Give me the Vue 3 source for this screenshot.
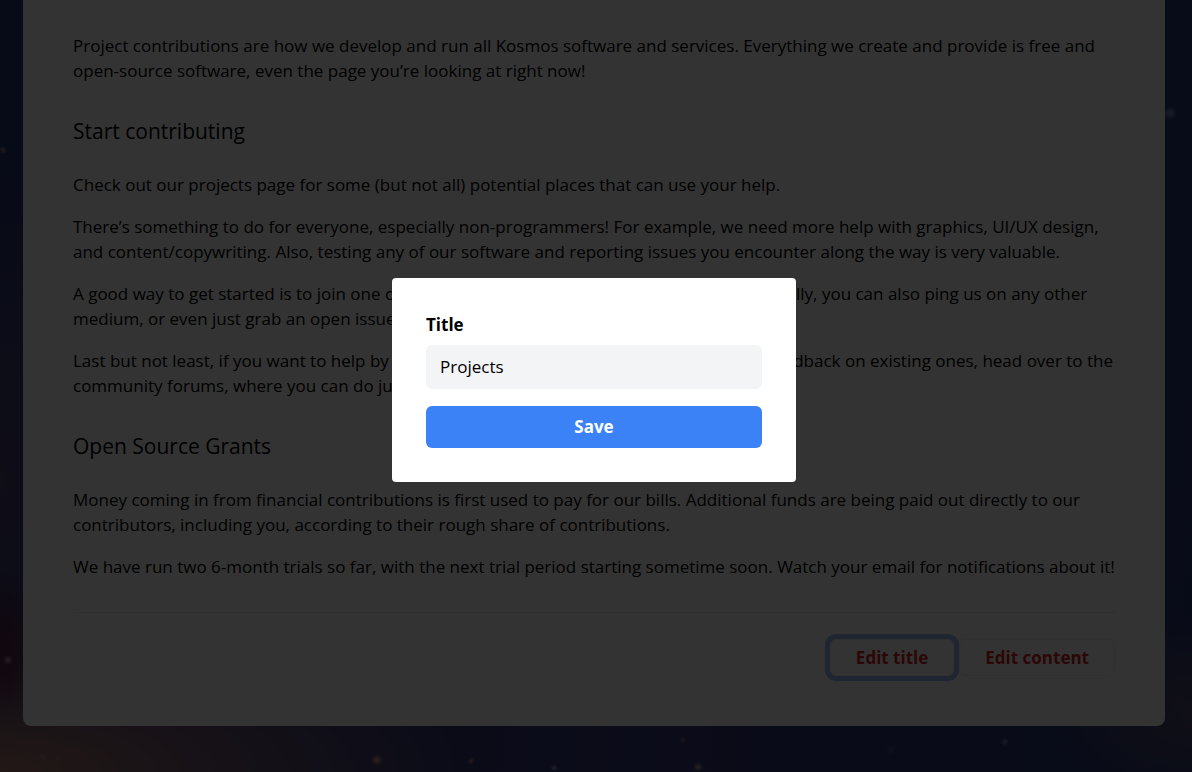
<script setup>
import { ref } from 'vue'

const title = ref('Projects')
</script>

<template>
  <div class="page">
    <main class="card">
      <p>
        Project contributions are how we develop and run all Kosmos software and services. Everything we create and
        provide is free and open-source software, even the page you’re looking at right now!
      </p>
      <h2>Start contributing</h2>
      <p>Check out our projects page for some (but not all) potential places that can use your help.</p>
      <p>
        There’s something to do for everyone, especially non-programmers! For example, we need more help with graphics,
        UI/UX design, and content/copywriting. Also, testing any of our software and reporting issues you encounter
        along the way is very valuable.
      </p>
      <p>
        A good way to get started is to join one of our chat rooms and introduce yourself. Additionally, you can also
        ping us on any other medium, or even just grab an open issue on our project repositories.
      </p>
      <p>
        Last but not least, if you want to help by proposing new features or by sending us some feedback on existing
        ones, head over to the community forums, where you can do just that.
      </p>
      <h2>Open Source Grants</h2>
      <p>
        Money coming in from financial contributions is first used to pay for our bills. Additional funds are being paid
        out directly to our contributors, including you, according to their rough share of contributions.
      </p>
      <p>
        We have run two 6-month trials so far, with the next trial period starting sometime soon. Watch your email for
        notifications about it!
      </p>
      <footer class="actions">
        <button type="button" class="edit active">Edit title</button>
        <button type="button" class="edit">Edit content</button>
      </footer>
    </main>
  </div>

  <div class="overlay">
    <form class="modal" role="dialog" aria-modal="true" aria-label="Edit title" @submit.prevent>
      <label for="title">Title</label>
      <input id="title" v-model="title" type="text" />
      <button type="submit" class="save">Save</button>
    </form>
  </div>
</template>

<style>
body {
  margin: 0;
}
</style>

<style scoped>
.page,
.overlay {
  font-family: 'Open Sans', 'Noto Sans', sans-serif;
  font-size: 17px;
  line-height: 25px;
  color: #000;
}

.page {
  box-sizing: border-box;
  min-height: 100vh;
  padding: 0 27px 46px 23px;
  background:
    radial-gradient(circle at 3px 150px, rgba(190, 150, 170, 0.8), transparent 4px),
    radial-gradient(circle at 8px 660px, rgba(200, 180, 210, 0.8), transparent 5px),
    radial-gradient(circle at 43px 757px, rgba(210, 150, 160, 0.7), transparent 4px),
    radial-gradient(circle at 58px 758px, rgba(200, 110, 120, 0.6), transparent 4px),
    radial-gradient(circle at 377px 760px, rgba(240, 170, 130, 0.9), transparent 6px),
    radial-gradient(circle at 471px 761px, rgba(230, 130, 130, 0.8), transparent 4px),
    radial-gradient(circle at 554px 768px, rgba(190, 180, 230, 0.8), transparent 4px),
    radial-gradient(circle at 683px 740px, rgba(170, 140, 160, 0.6), transparent 4px),
    radial-gradient(circle at 698px 767px, rgba(240, 190, 170, 0.8), transparent 5px),
    radial-gradient(circle at 891px 750px, rgba(120, 120, 190, 0.4), transparent 5px),
    radial-gradient(circle at 1005px 742px, rgba(160, 170, 240, 0.7), transparent 4px),
    radial-gradient(circle at 1170px 113px, rgba(170, 170, 230, 0.8), transparent 7px),
    radial-gradient(ellipse 50px 80px at 0 650px, rgba(90, 25, 60, 0.7) 20%, transparent),
    radial-gradient(ellipse 460px 160px at 0 772px, rgb(170, 120, 110), rgba(125, 95, 115, 0.85) 45%, transparent),
    radial-gradient(ellipse 140px 100px at 1192px 710px, rgba(100, 85, 115, 0.7), transparent),
    radial-gradient(ellipse 120px 300px at 0 480px, rgba(90, 75, 115, 0.7), transparent),
    linear-gradient(100deg, rgb(38, 55, 115), rgb(60, 60, 125) 55%, rgb(38, 55, 118));
}

.card {
  padding: 33px 50px 50px;
  background: #fff;
  border-radius: 0 0 8px 8px;
}

p {
  margin: 0 0 17px;
}

h2 {
  margin: 33px 0 26px;
  font-size: 21px;
  font-weight: 400;
  line-height: 30px;
}

.actions {
  display: flex;
  justify-content: flex-end;
  gap: 5px;
  margin-top: 33px;
  padding-top: 26px;
  border-top: 1px solid #e5e7eb;
}

button,
input {
  font: inherit;
}

.edit {
  padding: 5px 25px;
  color: #dc2626;
  font-weight: 700;
  background: #fff;
  border: 1px solid #eceef1;
  border-radius: 6px;
}

.edit.active {
  box-shadow: 0 0 0 5px #9bb8f3;
}

.overlay {
  position: fixed;
  inset: 0;
  display: flex;
  align-items: center;
  justify-content: center;
  padding: 0 4px 12px 0;
  background: rgba(0, 0, 0, 0.8);
}

.modal {
  box-sizing: border-box;
  display: flex;
  flex-direction: column;
  width: 404px;
  max-width: 100%;
  padding: 34px;
  background: #fff;
  border-radius: 4px;
}

label {
  margin-bottom: 7px;
  font-weight: 700;
  line-height: 26px;
}

input {
  margin: 0 0 17px;
  padding: 8px 13px;
  color: #000;
  line-height: 26px;
  background: #f3f4f6;
  border: 1px solid #f3f4f6;
  border-radius: 6px;
}

.save {
  padding: 8px;
  color: #fff;
  font-weight: 700;
  line-height: 26px;
  background: #3b82f6;
  border: 0;
  border-radius: 6px;
}
</style>
